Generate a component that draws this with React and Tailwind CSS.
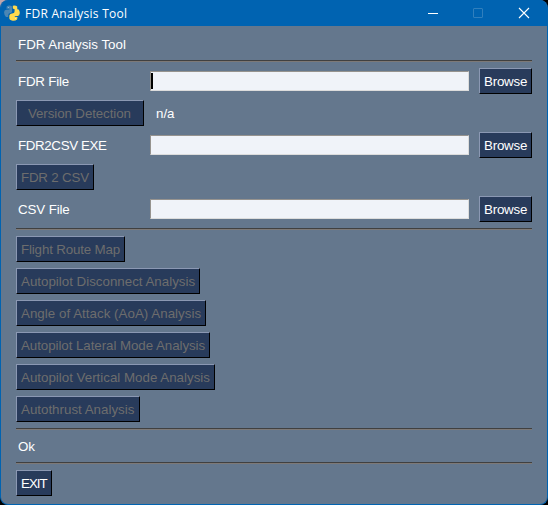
import React from 'react';

const analyses = [
  { label: 'Flight Route Map', size: 'w-[109px] tracking-[-0.15px]' },
  { label: 'Autopilot Disconnect Analysis', size: 'w-[184px]' },
  { label: 'Angle of Attack (AoA) Analysis', size: 'w-[190px] tracking-[0.03px]' },
  { label: 'Autopilot Lateral Mode Analysis', size: 'w-[194px] tracking-[-0.06px]' },
  { label: 'Autopilot Vertical Mode Analysis', size: 'w-[199px]' },
  { label: 'Autothrust Analysis', size: 'w-[124px]' },
];

function Button({ children, disabled, inset = 'pl-1', className = '' }) {
  return (
    <button
      disabled={disabled}
      className={`flex h-[26px] shrink-0 items-center justify-start whitespace-nowrap border border-t-[#8b98b3] border-l-[#8b98b3] border-r-black border-b-black bg-[#283b5b] pt-0.5 ${inset} ${disabled ? 'text-[#6d6d6d]' : 'text-white'} ${className}`}
    >
      {children}
    </button>
  );
}

function Separator() {
  return <div className="h-0.5 w-[516px] shrink-0 border-t border-b border-t-[#404040] border-b-[#7d7977]" />;
}

function FileRow({ label, focused, className = '' }) {
  return (
    <div className="flex h-[26px] items-center">
      <span className={`w-[134px] pt-0.5 pl-0.5 ${className}`}>{label}</span>
      <div className="h-5 w-[319px] border border-t-[#96938f] border-l-[#96938f] border-r-[#dcdcdc] border-b-[#dcdcdc] bg-[#f0f3f9] py-px">
        {focused && <div className="h-4 w-0.5 bg-black" />}
      </div>
      <Button className="ml-2.5 w-[53px] tracking-[-0.22px]">Browse</Button>
    </div>
  );
}

function PythonIcon() {
  return (
    <svg width="16" height="16" viewBox="0 0 16 16" className="mr-[5px] shrink-0">
      <path d="M2.8 1.2 Q5.3-.4 7.9 1.2 L8.1 6.4 Q7.9 7.5 6.6 8 L4.9 8.6 Q4.2 9 4.2 12 L2 12 Q0 9.8 .1 7.2 Q.2 5.2 2 4.8 L5.4 4.5 L5.4 3.8 L2.4 3.8Z" fill="#4a86b4" />
      <path d="M8.8.8 Q11.4-.2 13.2 1.5 L13.3 4.2 L14.6 4.4 Q16 6 15.7 8.4 Q15.5 10.6 13.8 11 L10.8 11.3 L10.8 12 L13.5 12.1 L13.1 14.4 Q10.8 16.2 7.8 15.4 Q5.4 15 5.3 13.2 L5.4 10.2 Q6 8.8 8 8.5 L9.8 8 Q10.8 7.5 10.6 4.2 L8.8 3.6Z" fill="#ffd94d" />
      <circle cx="4.4" cy="2.4" r=".5" fill="#a9cbe2" />
      <circle cx="11.4" cy="13.6" r=".5" fill="#fff3bd" />
    </svg>
  );
}

function TitleBar() {
  return (
    <div className="flex h-[26px] items-center bg-[#0063b1] pl-[3px] text-white">
      <PythonIcon />
      <span className="pt-0.5 font-['Open_Sans','Noto_Sans',sans-serif] text-[12px] leading-4 tracking-[0.27px]">FDR Analysis Tool</span>
      <svg width="110" height="14" viewBox="0 0 110 14" className="mr-[13px] ml-auto" fill="none">
        <path d="M4 7.5H14" stroke="#fff" />
        <rect x="49.5" y="2.5" width="9" height="9" rx=".5" stroke="#307fbd" />
        <path d="M95 2L105 12M105 2L95 12" stroke="#fff" strokeWidth="1.1" />
      </svg>
    </div>
  );
}

export default function App() {
  return (
    <div className="h-[505px] w-[548px] overflow-hidden bg-black">
      <div className="h-[505px] w-[548px] bg-[linear-gradient(135deg,#bfa6ac_0,#bfa6ac_12px,transparent_24px)]">
        <div className="flex h-[505px] w-[548px] flex-col overflow-hidden rounded-[8px] border border-t-0 border-[#0063b1] bg-[#64778d] font-['Liberation_Sans',Arial,sans-serif] text-[13.33px] leading-4 text-white">
          <TitleBar />
          <div className="flex flex-col items-start pl-[15px]">
            <div className="flex h-[34px] items-center pt-1 pl-0.5">FDR Analysis Tool</div>
            <Separator />
            <div className="flex flex-col items-start gap-1.5 py-1.5">
              <FileRow label="FDR File" focused className="tracking-[-0.2px]" />
              <div className="flex items-center gap-3">
                <Button disabled inset="pl-[11px]" className="w-32 tracking-[-0.1px]">Version Detection</Button>
                <span className="pt-0.5">n/a</span>
              </div>
              <FileRow label="FDR2CSV EXE" className="tracking-[-0.36px]" />
              <Button disabled className="w-[78px] tracking-[-0.2px]">FDR 2 CSV</Button>
              <FileRow label="CSV File" className="tracking-[-0.12px]" />
            </div>
            <Separator />
            <div className="flex flex-col items-start gap-1.5 py-1.5">
              {analyses.map(({ label, size }) => (
                <Button key={label} disabled className={size}>{label}</Button>
              ))}
            </div>
            <Separator />
            <div className="flex h-8 items-center pl-0.5 pt-0.5">Ok</div>
            <Separator />
            <Button className="mt-1.5 w-9 tracking-[-1px]">EXIT</Button>
          </div>
        </div>
      </div>
    </div>
  );
}
